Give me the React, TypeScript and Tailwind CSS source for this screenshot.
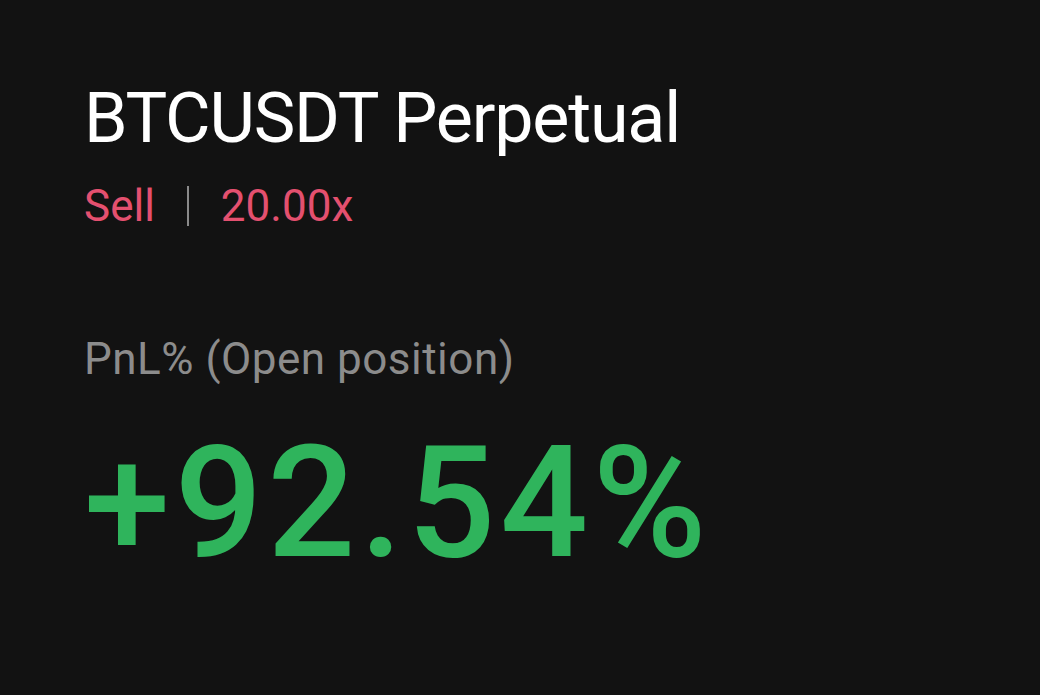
export default function App() {
  return (
    <main className="w-[1040px] h-[695px] bg-[#121212] overflow-hidden font-['Roboto',sans-serif]">
      <div className="pl-[84px] pt-[78px] flex flex-col">
        <h1 className="text-[70px] leading-[80px] text-white tracking-[-1.2px]">
          BTCUSDT Perpetual
        </h1>
        <div className="mt-[22px] flex items-center text-[44px] leading-[52px] text-[#e4506f]">
          <span>Sell</span>
          <span className="mx-[32px] h-[40px] w-[2px] bg-[#8a8a8a]" />
          <span>20.00x</span>
        </div>
        <p className="mt-[102px] text-[44px] leading-[50px] tracking-[0.5px] text-[#8c8c8c]">
          PnL% (Open position)
        </p>
        <p className="mt-[34px] text-[155px] leading-[170px] tracking-[4.5px] font-medium text-[#2fb45c]">
          +92.54%
        </p>
      </div>
    </main>
  );
}
